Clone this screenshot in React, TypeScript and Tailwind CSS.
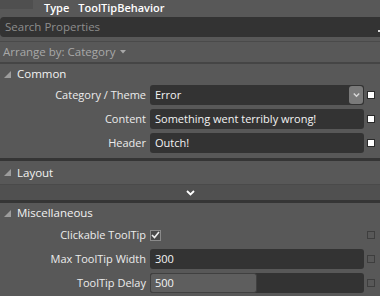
import React from 'react';

const font = { fontFamily: '"Open Sans", "Noto Sans", sans-serif' };

const Triangle: React.FC = () => (
  <svg width="7" height="7" viewBox="0 0 7 7" className="shrink-0">
    <path d="M7 0 L7 7 L0 7 Z" fill="#9c9c9c" />
  </svg>
);

const Chevron: React.FC<{ color?: string; w?: number }> = ({ color = '#ffffff', w = 9 }) => (
  <svg width={w} height={6} viewBox="0 0 9 6">
    <path d="M1 1 L4.5 4.5 L8 1" stroke={color} strokeWidth="1.8" fill="none" />
  </svg>
);

const SectionHeader: React.FC<{ title: string; h: string }> = ({ title, h }) => (
  <div className={`flex items-center gap-[6px] pl-[4px] ${h}`}>
    <Triangle />
    <span className="text-[11.5px] text-[#f2f2f2]">{title}</span>
  </div>
);

const Marker: React.FC<{ on?: boolean }> = ({ on }) => (
  <div
    className={`w-[8px] h-[8px] ml-[3px] shrink-0 ${
      on ? 'bg-white border border-[#2a2a2a]' : 'border border-[#3e3e3e]'
    }`}
  />
);

const Row: React.FC<{ label: string; children: React.ReactNode; on?: boolean }> = ({ label, children, on }) => (
  <div className="flex items-center h-[20px]">
    <div className="w-[146px] text-right text-[11px] text-[#ececec] whitespace-nowrap">{label}</div>
    <div className="ml-[4px] w-[214px] h-[20px] flex items-center">{children}</div>
    <Marker on={on} />
  </div>
);

const Field: React.FC<{ value: string }> = ({ value }) => (
  <div className="w-full h-full bg-[#333333] rounded-[3px] flex items-center px-[5px] text-[11px] text-[#f4f4f4] whitespace-nowrap">
    {value}
  </div>
);

export default function App() {
  return (
    <div className="w-[380px] h-[296px] overflow-hidden bg-[#585858] flex flex-col" style={font}>
      {/* top bar */}
      <div className="h-[17px] flex items-start shrink-0">
        <div className="w-[33px] h-[9px] bg-[#4f4f4f]" />
        <div className="flex items-center h-[15px] ml-[11px] text-[11px] leading-none text-white font-semibold gap-[9px]">
          <span>Type</span>
          <span>ToolTipBehavior</span>
        </div>
      </div>

      {/* search */}
      <div className="h-[20px] bg-[#333333] rounded-l-[4px] flex items-center px-[5px] shrink-0 relative">
        <span className="text-[11.5px] text-[#8d8d8d]">Search Properties</span>
        <div className="absolute right-0 top-[13px] w-[2px] h-[2px] bg-[#dddddd]" />
      </div>
      <div className="h-[4px] shrink-0" />
      <div className="h-[1px] bg-[#4a4a4a] shrink-0" />

      {/* arrange */}
      <div className="h-[20px] flex items-center pl-[3px] gap-[5px] shrink-0">
        <span className="text-[11.5px] text-[#a8a8a8]">Arrange by: Category</span>
        <svg width="6" height="4" viewBox="0 0 6 4">
          <path d="M0 0 L6 0 L3 3.5 Z" fill="#a8a8a8" />
        </svg>
      </div>
      <div className="h-[2px] bg-[#454545] shrink-0" />

      {/* Common */}
      <SectionHeader title="Common" h="h-[20px]" />
      <div className="flex flex-col gap-[4px] pt-[1px] pb-[5px]">
        <Row label="Category / Theme" on>
          <div className="w-full h-full bg-[#333333] rounded-[3px] flex items-center pl-[5px] pr-[1px] text-[11px] text-[#f4f4f4]">
            <span className="flex-1">Error</span>
            <div className="w-[14px] h-[18px] bg-[#7a7a7a] rounded-[3px] flex items-center justify-center">
              <Chevron color="#d8d8d8" w={7} />
            </div>
          </div>
        </Row>
        <Row label="Content" on>
          <Field value="Something went terribly wrong!" />
        </Row>
        <Row label="Header" on>
          <Field value="Outch!" />
        </Row>
      </div>
      <div className="h-[3px] bg-[#353535] shrink-0" />

      {/* Layout */}
      <SectionHeader title="Layout" h="h-[23px]" />
      <div className="h-[1px] bg-[#4a4a4a] shrink-0" />
      <div className="h-[15px] bg-[#505050] flex items-center justify-center shrink-0">
        <Chevron />
      </div>
      <div className="h-[3px] bg-[#353535] shrink-0" />

      {/* Miscellaneous */}
      <SectionHeader title="Miscellaneous" h="h-[20px]" />
      <div className="flex flex-col gap-[4px] pt-[2px]">
        <Row label="Clickable ToolTip">
          <div className="w-[11px] h-[11px] border border-[#8a8a8a] bg-[#4a4a4a] flex items-center justify-center">
            <svg width="9" height="8" viewBox="0 0 9 8">
              <path d="M1 4 L3.5 6.5 L8 1" stroke="#eeeeee" strokeWidth="1.6" fill="none" />
            </svg>
          </div>
        </Row>
        <Row label="Max ToolTip Width">
          <Field value="300" />
        </Row>
        <Row label="ToolTip Delay">
          <div className="w-full h-full bg-[#333333] rounded-[3px] relative flex items-center">
            <div className="absolute left-0 top-0 bottom-0 w-[107px] bg-[#5e5e5e] rounded-[3px] border border-[#404040]" />
            <span className="relative px-[5px] text-[11px] text-[#f4f4f4]">500</span>
          </div>
        </Row>
      </div>
    </div>
  );
}
